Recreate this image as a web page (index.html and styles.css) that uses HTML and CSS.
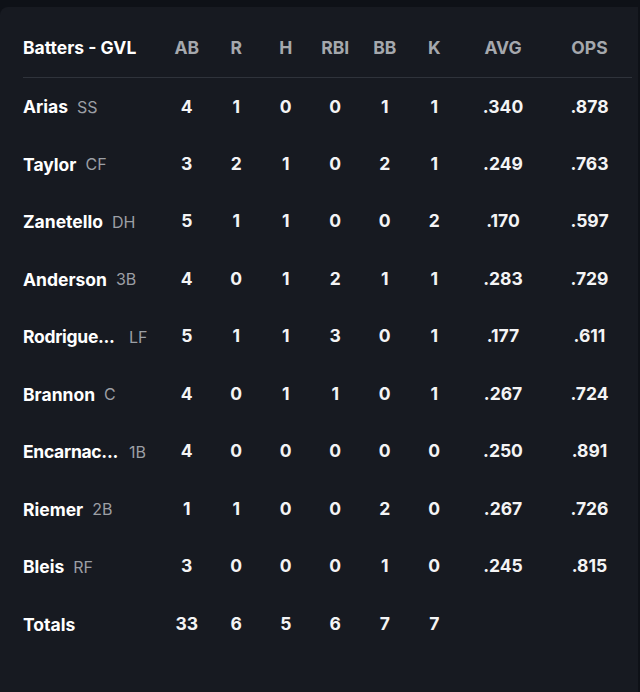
FILE: index.html
```html
<!DOCTYPE html>
<html>
<head>
<meta charset="utf-8">
<link rel="stylesheet" href="styles.css">
</head>
<body>
<div class="card">
  <table class="box">
    <colgroup>
      <col class="c-name"><col class="c-s"><col class="c-s"><col class="c-s"><col class="c-s"><col class="c-s"><col class="c-s"><col class="c-avg"><col class="c-ops">
    </colgroup>
    <thead>
      <tr>
        <th class="name-h">Batters - GVL</th>
        <th>AB</th><th>R</th><th>H</th><th>RBI</th><th>BB</th><th>K</th><th>AVG</th><th>OPS</th>
      </tr>
    </thead>
    <tbody>
      <tr><td class="player"><span class="nm">Arias</span><span class="pos">SS</span></td><td>4</td><td>1</td><td>0</td><td>0</td><td>1</td><td>1</td><td>.340</td><td>.878</td></tr>
      <tr><td class="player"><span class="nm">Taylor</span><span class="pos">CF</span></td><td>3</td><td>2</td><td>1</td><td>0</td><td>2</td><td>1</td><td>.249</td><td>.763</td></tr>
      <tr><td class="player"><span class="nm">Zanetello</span><span class="pos">DH</span></td><td>5</td><td>1</td><td>1</td><td>0</td><td>0</td><td>2</td><td>.170</td><td>.597</td></tr>
      <tr><td class="player"><span class="nm">Anderson</span><span class="pos">3B</span></td><td>4</td><td>0</td><td>1</td><td>2</td><td>1</td><td>1</td><td>.283</td><td>.729</td></tr>
      <tr><td class="player"><span class="nm cut">Rodrigue...</span><span class="pos">LF</span></td><td>5</td><td>1</td><td>1</td><td>3</td><td>0</td><td>1</td><td>.177</td><td>.611</td></tr>
      <tr><td class="player"><span class="nm">Brannon</span><span class="pos">C</span></td><td>4</td><td>0</td><td>1</td><td>1</td><td>0</td><td>1</td><td>.267</td><td>.724</td></tr>
      <tr><td class="player"><span class="nm cut">Encarnac...</span><span class="pos">1B</span></td><td>4</td><td>0</td><td>0</td><td>0</td><td>0</td><td>0</td><td>.250</td><td>.891</td></tr>
      <tr><td class="player"><span class="nm">Riemer</span><span class="pos">2B</span></td><td>1</td><td>1</td><td>0</td><td>0</td><td>2</td><td>0</td><td>.267</td><td>.726</td></tr>
      <tr><td class="player"><span class="nm">Bleis</span><span class="pos">RF</span></td><td>3</td><td>0</td><td>0</td><td>0</td><td>1</td><td>0</td><td>.245</td><td>.815</td></tr>
      <tr class="totals"><td class="player"><span class="nm">Totals</span></td><td>33</td><td>6</td><td>5</td><td>6</td><td>7</td><td>7</td><td></td><td></td></tr>
    </tbody>
  </table>
</div>
</body>
</html>
```
FILE: styles.css
```css
* { box-sizing: border-box; }
html, body {
  margin: 0;
  padding: 0;
  background: #0e1117;
  height: 100%;
}
body {
  padding-top: 7px;
  font-family: "Inter", "Liberation Sans", sans-serif;
  overflow: hidden;
}
.card {
  background: #171a21;
  border-radius: 8px 0 0 0;
  height: 685px;
  margin-right: 2px;
  padding: 12px 6px 0 23px;
}
.box {
  border-collapse: collapse;
  table-layout: fixed;
  width: 609px;
}
.c-name { width: 139px; }
.c-s { width: 49.5px; }
.c-avg { width: 88px; }
.c-ops { width: 85px; }
thead tr {
  height: 58px;
  border-bottom: 1px solid #2f333b;
}
th {
  font-weight: 700;
  font-size: 17.5px;
  color: #a5a8ad;
  text-align: center;
  padding: 0;
}
th.name-h {
  text-align: left;
  color: #ffffff;
}
tbody tr { height: 57.5px; }
td {
  padding: 0;
  text-align: center;
  font-size: 17.5px;
  font-weight: 700;
  color: #f4f4f5;
}
td.player {
  text-align: left;
  white-space: nowrap;
}
.nm {
  display: inline-block;
  white-space: nowrap;
  vertical-align: middle;
  font-weight: 700;
  color: #ffffff;
}
.nm.cut {
  width: 97px;
  letter-spacing: -0.3px;
}
.pos {
  display: inline-block;
  vertical-align: middle;
  margin-left: 9px;
  font-size: 16px;
  font-weight: 400;
  color: #9c9fa5;
}
```
